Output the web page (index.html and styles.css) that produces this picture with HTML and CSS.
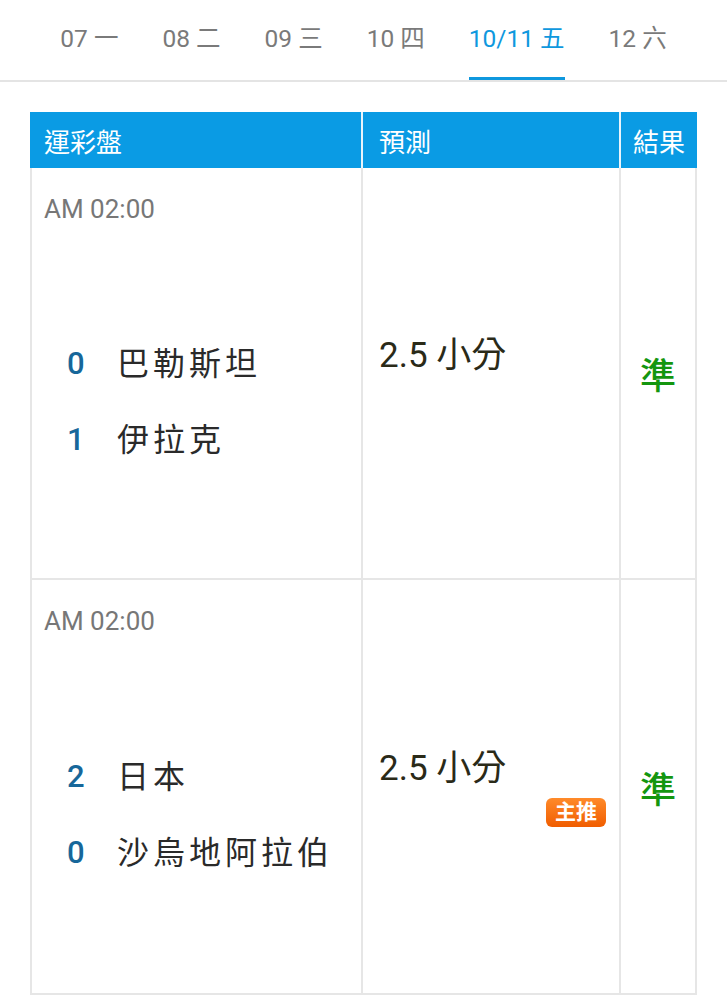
FILE: index.html
```html
<!DOCTYPE html>
<html lang="zh-Hant">
<head>
<meta charset="utf-8">
<title>運彩盤</title>
<link rel="stylesheet" href="styles.css">
</head>
<body>
<nav class="tabs">
  <span class="tab">07 一</span>
  <span class="tab">08 二</span>
  <span class="tab">09 三</span>
  <span class="tab">10 四</span>
  <span class="tab active">10/11 五</span>
  <span class="tab">12 六</span>
</nav>
<div class="board">
  <div class="head c1">運彩盤</div>
  <div class="head c2">預測</div>
  <div class="head c3">結果</div>

  <div class="cell game">
    <div class="time">AM 02:00</div>
    <div class="teams">
      <div class="team"><span class="score">0</span><span class="name">巴勒斯坦</span></div>
      <div class="team"><span class="score">1</span><span class="name">伊拉克</span></div>
    </div>
  </div>
  <div class="cell pick">
    <div class="pick-box">
      <div class="pick-text">2.5 小分</div>
      <div class="badge-row"><span class="badge hidden">主推</span></div>
    </div>
  </div>
  <div class="cell result"><span class="ok">準</span></div>

  <div class="cell game">
    <div class="time">AM 02:00</div>
    <div class="teams">
      <div class="team"><span class="score">2</span><span class="name">日本</span></div>
      <div class="team"><span class="score">0</span><span class="name">沙烏地阿拉伯</span></div>
    </div>
  </div>
  <div class="cell pick">
    <div class="pick-box">
      <div class="pick-text">2.5 小分</div>
      <div class="badge-row"><span class="badge">主推</span></div>
    </div>
  </div>
  <div class="cell result"><span class="ok">準</span></div>
</div>
</body>
</html>
```
FILE: styles.css
```css
html, body {
  margin: 0;
  padding: 0;
  background: #ffffff;
  font-family: Roboto, "Noto Sans CJK TC", sans-serif;
}

.tabs {
  display: flex;
  justify-content: center;
  gap: 44px;
  height: 82px;
  border-bottom: 2px solid #e4e4e4;
  box-sizing: border-box;
  padding-left: 0;
}

.tab {
  display: flex;
  align-items: center;
  font-size: 24.5px;
  color: #7a7a7a;
  border-bottom: 3px solid transparent;
  padding-top: 2px;
  line-height: 1;
  white-space: nowrap;
}

.tab.active {
  color: #0f98de;
  border-bottom-color: #0f98de;
}

.board {
  margin: 30px 30px 0 30px;
  display: grid;
  grid-template-columns: 333px 258px 76px;
  grid-template-rows: 56px 412px 415px;
}

.head {
  background: #0a9be4;
  color: #ffffff;
  font-size: 26px;
  display: flex;
  align-items: center;
  padding-left: 14px;
  border-right: 2px solid #e9f4fb;
}

.head.c2 {
  padding-left: 16px;
}

.head.c3 {
  padding-left: 12px;
  border-right: none;
}

.cell {
  border-right: 2px solid #e6e6e6;
  border-bottom: 2px solid #e6e6e6;
  box-sizing: border-box;
}

.game {
  border-left: 2px solid #e6e6e6;
  display: flex;
  flex-direction: column;
  padding: 25px 0 0 12px;
}

.time {
  font-size: 26px;
  color: #777777;
  line-height: 32px;
}

.teams {
  flex: 1;
  display: flex;
  flex-direction: column;
  justify-content: center;
  gap: 32px;
}

.team {
  display: flex;
  align-items: center;
  line-height: 44px;
}

.score {
  width: 50px;
  padding-left: 23px;
  font-size: 31px;
  font-weight: 500;
  color: #17679a;
}

.name {
  font-size: 32px;
  color: #2a2a2a;
  letter-spacing: 4px;
}

.pick {
  display: flex;
  align-items: center;
  padding: 0 13px 0 16px;
}

.pick-box {
  width: 100%;
  display: flex;
  flex-direction: column;
}

.pick-text {
  font-size: 35px;
  color: #2a2a18;
  line-height: 46px;
}

.badge-row {
  display: flex;
  justify-content: flex-end;
  margin-top: 6px;
}

.badge {
  background: linear-gradient(#ff8a2a, #f05d00);
  color: #ffffff;
  font-size: 21px;
  font-weight: 700;
  line-height: 29px;
  padding: 0 9px;
  border-radius: 6px;
}

.badge.hidden {
  visibility: hidden;
}

.result {
  display: flex;
  align-items: center;
  justify-content: center;
}

.ok {
  color: #14960f;
  font-size: 36px;
  font-weight: 500;
}
```
